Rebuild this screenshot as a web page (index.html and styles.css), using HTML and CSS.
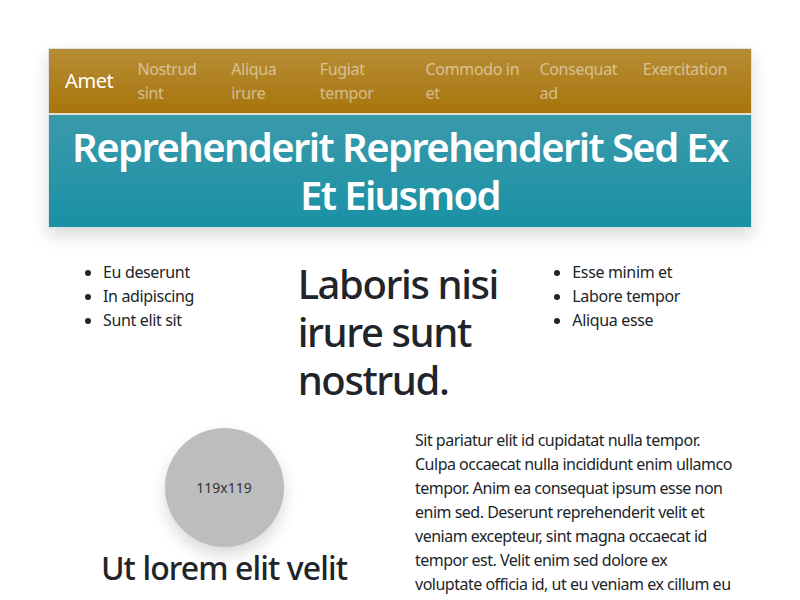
FILE: index.html
```html
<!DOCTYPE html>
<html lang="en">
<head>
<meta charset="utf-8">
<title>Amet</title>
<link rel="stylesheet" href="styles.css">
</head>
<body>
<div class="page">
  <div class="hero-box">
    <nav class="navbar">
      <a class="brand" href="#">Amet</a>
      <ul class="nav-links">
        <li><a href="#">Nostrud sint</a></li>
        <li><a href="#">Aliqua irure</a></li>
        <li><a href="#">Fugiat tempor</a></li>
        <li><a href="#">Commodo in et</a></li>
        <li><a href="#">Consequat ad</a></li>
        <li><a href="#">Exercitation</a></li>
      </ul>
    </nav>
    <header class="banner">
      <h1 class="banner-title">Reprehenderit Reprehenderit Sed Ex Et Eiusmod</h1>
    </header>
  </div>

  <section class="row-three">
    <div class="col">
      <ul class="list">
        <li>Eu deserunt</li>
        <li>In adipiscing</li>
        <li>Sunt elit sit</li>
      </ul>
    </div>
    <div class="col">
      <h2 class="big-heading">Laboris nisi irure sunt nostrud.</h2>
    </div>
    <div class="col">
      <ul class="list">
        <li>Esse minim et</li>
        <li>Labore tempor</li>
        <li>Aliqua esse</li>
      </ul>
    </div>
  </section>

  <section class="row-two">
    <div class="col profile">
      <div class="avatar">119x119</div>
      <h3 class="profile-name">Ut lorem elit velit</h3>
      <p class="profile-text">Do cillum elit ullamco officia culpa amet ad in commodo laborum.</p>
    </div>
    <div class="col">
      <p class="body-text">Sit pariatur elit id cupidatat nulla tempor. Culpa occaecat nulla incididunt enim ullamco tempor. Anim ea consequat ipsum esse non enim sed. Deserunt reprehenderit velit et veniam excepteur, sint magna occaecat id tempor est. Velit enim sed dolore ex voluptate officia id, ut eu veniam ex cillum eu dolor. Nulla aute fugiat laborum in qui.</p>
    </div>
  </section>
</div>
</body>
</html>
```

FILE: styles.css
```css
* {
  box-sizing: border-box;
}

html, body {
  margin: 0;
  padding: 0;
  background: #ffffff;
}

body {
  font-family: "Noto Sans", "Open Sans", sans-serif;
  font-size: 16px;
  line-height: 1.5;
  letter-spacing: -0.35px;
  color: #212529;
}

.page {
  width: 704px;
  margin: 48px auto 0;
}

.hero-box {
  border: 1px solid #dee2e6;
  box-shadow: 0 8px 16px rgba(0, 0, 0, 0.15);
}

.navbar {
  display: flex;
  align-items: center;
  padding: 8px 16px;
  background: linear-gradient(to bottom, #b78d35, #a7750c);
  border-bottom: 2px solid #e5e0d6;
}

.brand {
  font-size: 20px;
  line-height: 30px;
  letter-spacing: -0.4px;
  color: #ffffff;
  text-decoration: none;
  margin-right: 16px;
  white-space: nowrap;
}

.nav-links {
  display: flex;
  list-style: none;
  margin: 0;
  padding: 0;
  flex: 1;
}

.nav-links li {
  flex: 0 1 auto;
}

.nav-links a {
  display: block;
  padding: 0 8px;
  color: rgba(255, 255, 255, 0.5);
  text-decoration: none;
  line-height: 24px;
}

.banner {
  background: linear-gradient(to bottom, #3a9aab, #1a91a5);
  padding: 8px 16px;
}

.banner-title {
  margin: 0;
  text-align: center;
  color: #ffffff;
  font-size: 40px;
  line-height: 48px;
  font-weight: 600;
  letter-spacing: -1.6px;
}

.row-three {
  display: grid;
  grid-template-columns: repeat(3, 1fr);
  margin-top: 32px;
}

.row-three .col {
  padding: 0 15px;
}

.list {
  margin: 0 0 16px;
  padding-left: 40px;
}

.big-heading {
  margin: 0 0 8px;
  font-size: 40px;
  line-height: 48px;
  font-weight: 500;
  letter-spacing: -1.4px;
}

.row-two {
  display: grid;
  grid-template-columns: 1fr 1fr;
  margin-top: 16px;
}

.row-two .col {
  padding: 0 15px;
}

.profile {
  text-align: center;
}

.avatar {
  width: 119px;
  height: 119px;
  margin: 0 auto;
  border-radius: 50%;
  background: #bdbdbd;
  color: #333333;
  font-size: 14px;
  letter-spacing: 0;
  display: flex;
  align-items: center;
  justify-content: center;
  box-shadow: 0 8px 16px rgba(0, 0, 0, 0.15);
}

.profile-name {
  margin: 2px 0 8px;
  font-size: 32px;
  line-height: 38px;
  font-weight: 500;
  letter-spacing: -0.9px;
}

.profile-text {
  margin: 0;
}

.body-text {
  margin: 0;
  letter-spacing: -0.5px;
}
```
